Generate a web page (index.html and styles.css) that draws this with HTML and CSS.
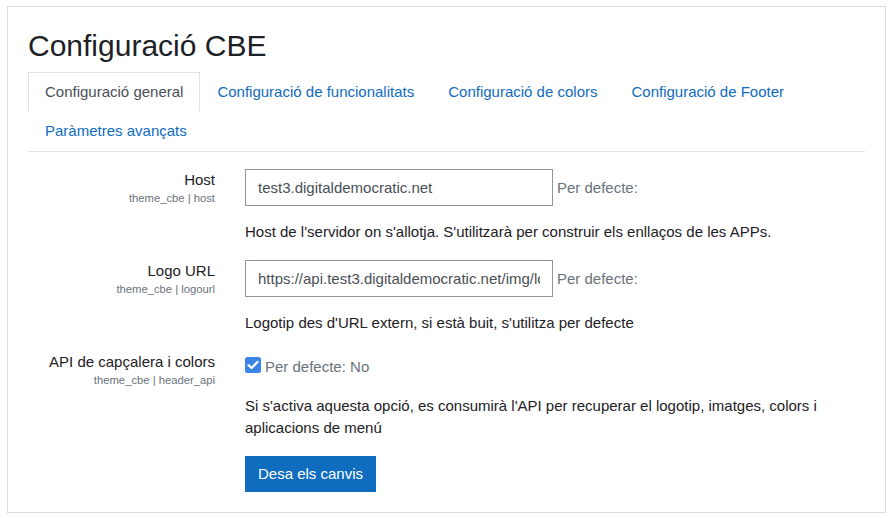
FILE: index.html
```html
<!DOCTYPE html>
<html lang="ca">
<head>
<meta charset="utf-8">
<title>Configuració CBE</title>
<link rel="stylesheet" href="styles.css">
</head>
<body>
<div class="box">
  <h2 class="title">Configuració CBE</h2>
  <ul class="tabs">
    <li><a class="tab active" href="#">Configuració general</a></li>
    <li><a class="tab" href="#">Configuració de funcionalitats</a></li>
    <li><a class="tab" href="#">Configuració de colors</a></li>
    <li><a class="tab" href="#">Configuració de Footer</a></li>
    <li><a class="tab" href="#">Paràmetres avançats</a></li>
  </ul>
  <form class="settings">
    <div class="setting">
      <div class="label-col">
        <label class="label">Host</label>
        <span class="key">theme_cbe | host</span>
      </div>
      <div class="elem-col">
        <div class="field">
          <input class="text-input" type="text" value="test3.digitaldemocratic.net">
          <span class="default">Per defecte:</span>
        </div>
        <div class="desc">Host de l'servidor on s'allotja. S'utilitzarà per construir els enllaços de les APPs.</div>
      </div>
    </div>
    <div class="setting">
      <div class="label-col">
        <label class="label">Logo URL</label>
        <span class="key">theme_cbe | logourl</span>
      </div>
      <div class="elem-col">
        <div class="field">
          <input class="text-input" type="text" value="https://api.test3.digitaldemocratic.net/img/logo.png">
          <span class="default">Per defecte:</span>
        </div>
        <div class="desc">Logotip des d'URL extern, si està buit, s'utilitza per defecte</div>
      </div>
    </div>
    <div class="setting">
      <div class="label-col">
        <label class="label">API de capçalera i colors</label>
        <span class="key">theme_cbe | header_api</span>
      </div>
      <div class="elem-col">
        <div class="check-line">
          <svg class="checkbox" width="16" height="16" viewBox="0 0 16 16">
            <rect x="0" y="0" width="16" height="16" rx="2.5" fill="#3b84e8"/>
            <path d="M3.6 8.2 L6.6 11 L12.4 5" fill="none" stroke="#fff" stroke-width="2.3" stroke-linecap="round" stroke-linejoin="round"/>
          </svg>
          <span class="default">Per defecte: No</span>
        </div>
        <div class="desc">Si s'activa aquesta opció, es consumirà l'API per recuperar el logotip, imatges, colors i aplicacions de menú</div>
        <div class="actions">
          <button class="btn" type="button">Desa els canvis</button>
        </div>
      </div>
    </div>
  </form>
</div>
</body>
</html>
```
FILE: styles.css
```css
html, body {
  margin: 0;
  padding: 0;
  background: #fff;
}
body {
  font-family: "Liberation Sans", Arial, sans-serif;
  font-size: 15px;
  line-height: 22.5px;
  color: #1d2125;
}
.box {
  box-sizing: border-box;
  width: 879px;
  height: 507px;
  margin: 6px 0 0 7px;
  border: 1px solid #dcdcdc;
  padding: 21px 20px 20px 20px;
}
.title {
  margin: 0 0 7.5px 0;
  font-size: 30px;
  line-height: 36px;
  font-weight: 400;
  color: #1d2125;
}
.tabs {
  list-style: none;
  margin: 0;
  padding: 0;
  display: flex;
  flex-wrap: wrap;
  border-bottom: 1px solid #dee2e6;
}
.tabs li {
  margin-bottom: -1px;
}
.tab {
  display: block;
  padding: 8px 16px;
  border: 1px solid transparent;
  color: #0f6cbf;
  text-decoration: none;
  line-height: 22.5px;
}
.tab.active {
  color: #495057;
  background: #fff;
  border-color: #dee2e6 #dee2e6 #fff;
}
.settings {
  margin-top: 17.5px;
}
.setting {
  display: grid;
  grid-template-columns: 187px 1fr;
  column-gap: 30px;
  margin-bottom: 16.5px;
}
.label-col {
  text-align: right;
}
.label {
  display: block;
  line-height: 22.5px;
}
.key {
  display: block;
  font-size: 11.25px;
  line-height: 13.5px;
  color: #6a737b;
}
.field {
  display: flex;
  align-items: baseline;
  gap: 4px;
}
.text-input {
  box-sizing: border-box;
  width: 308px;
  height: 36.5px;
  padding: 6px 12px;
  border: 1px solid #8f959e;
  border-radius: 0;
  font-family: "Liberation Sans", Arial, sans-serif;
  font-size: 15px;
  line-height: 22.5px;
  color: #495057;
  background: #fff;
  margin: 0;
}
.default {
  color: #6a737b;
}
.desc {
  margin-top: 15.5px;
}
.check-line {
  display: flex;
  align-items: flex-start;
  gap: 4px;
  padding-top: 5px;
}
.checkbox {
  display: block;
  margin-top: 1px;
  flex: none;
}
.check-line + .desc {
  margin-top: 16px;
}
.actions {
  margin-top: 16px;
}
.btn {
  font-family: "Liberation Sans", Arial, sans-serif;
  font-size: 15px;
  line-height: 22.5px;
  padding: 6px 12px;
  border: 1px solid #0f6cbf;
  border-radius: 0;
  background: #0f6cbf;
  color: #fff;
  cursor: pointer;
}
```
